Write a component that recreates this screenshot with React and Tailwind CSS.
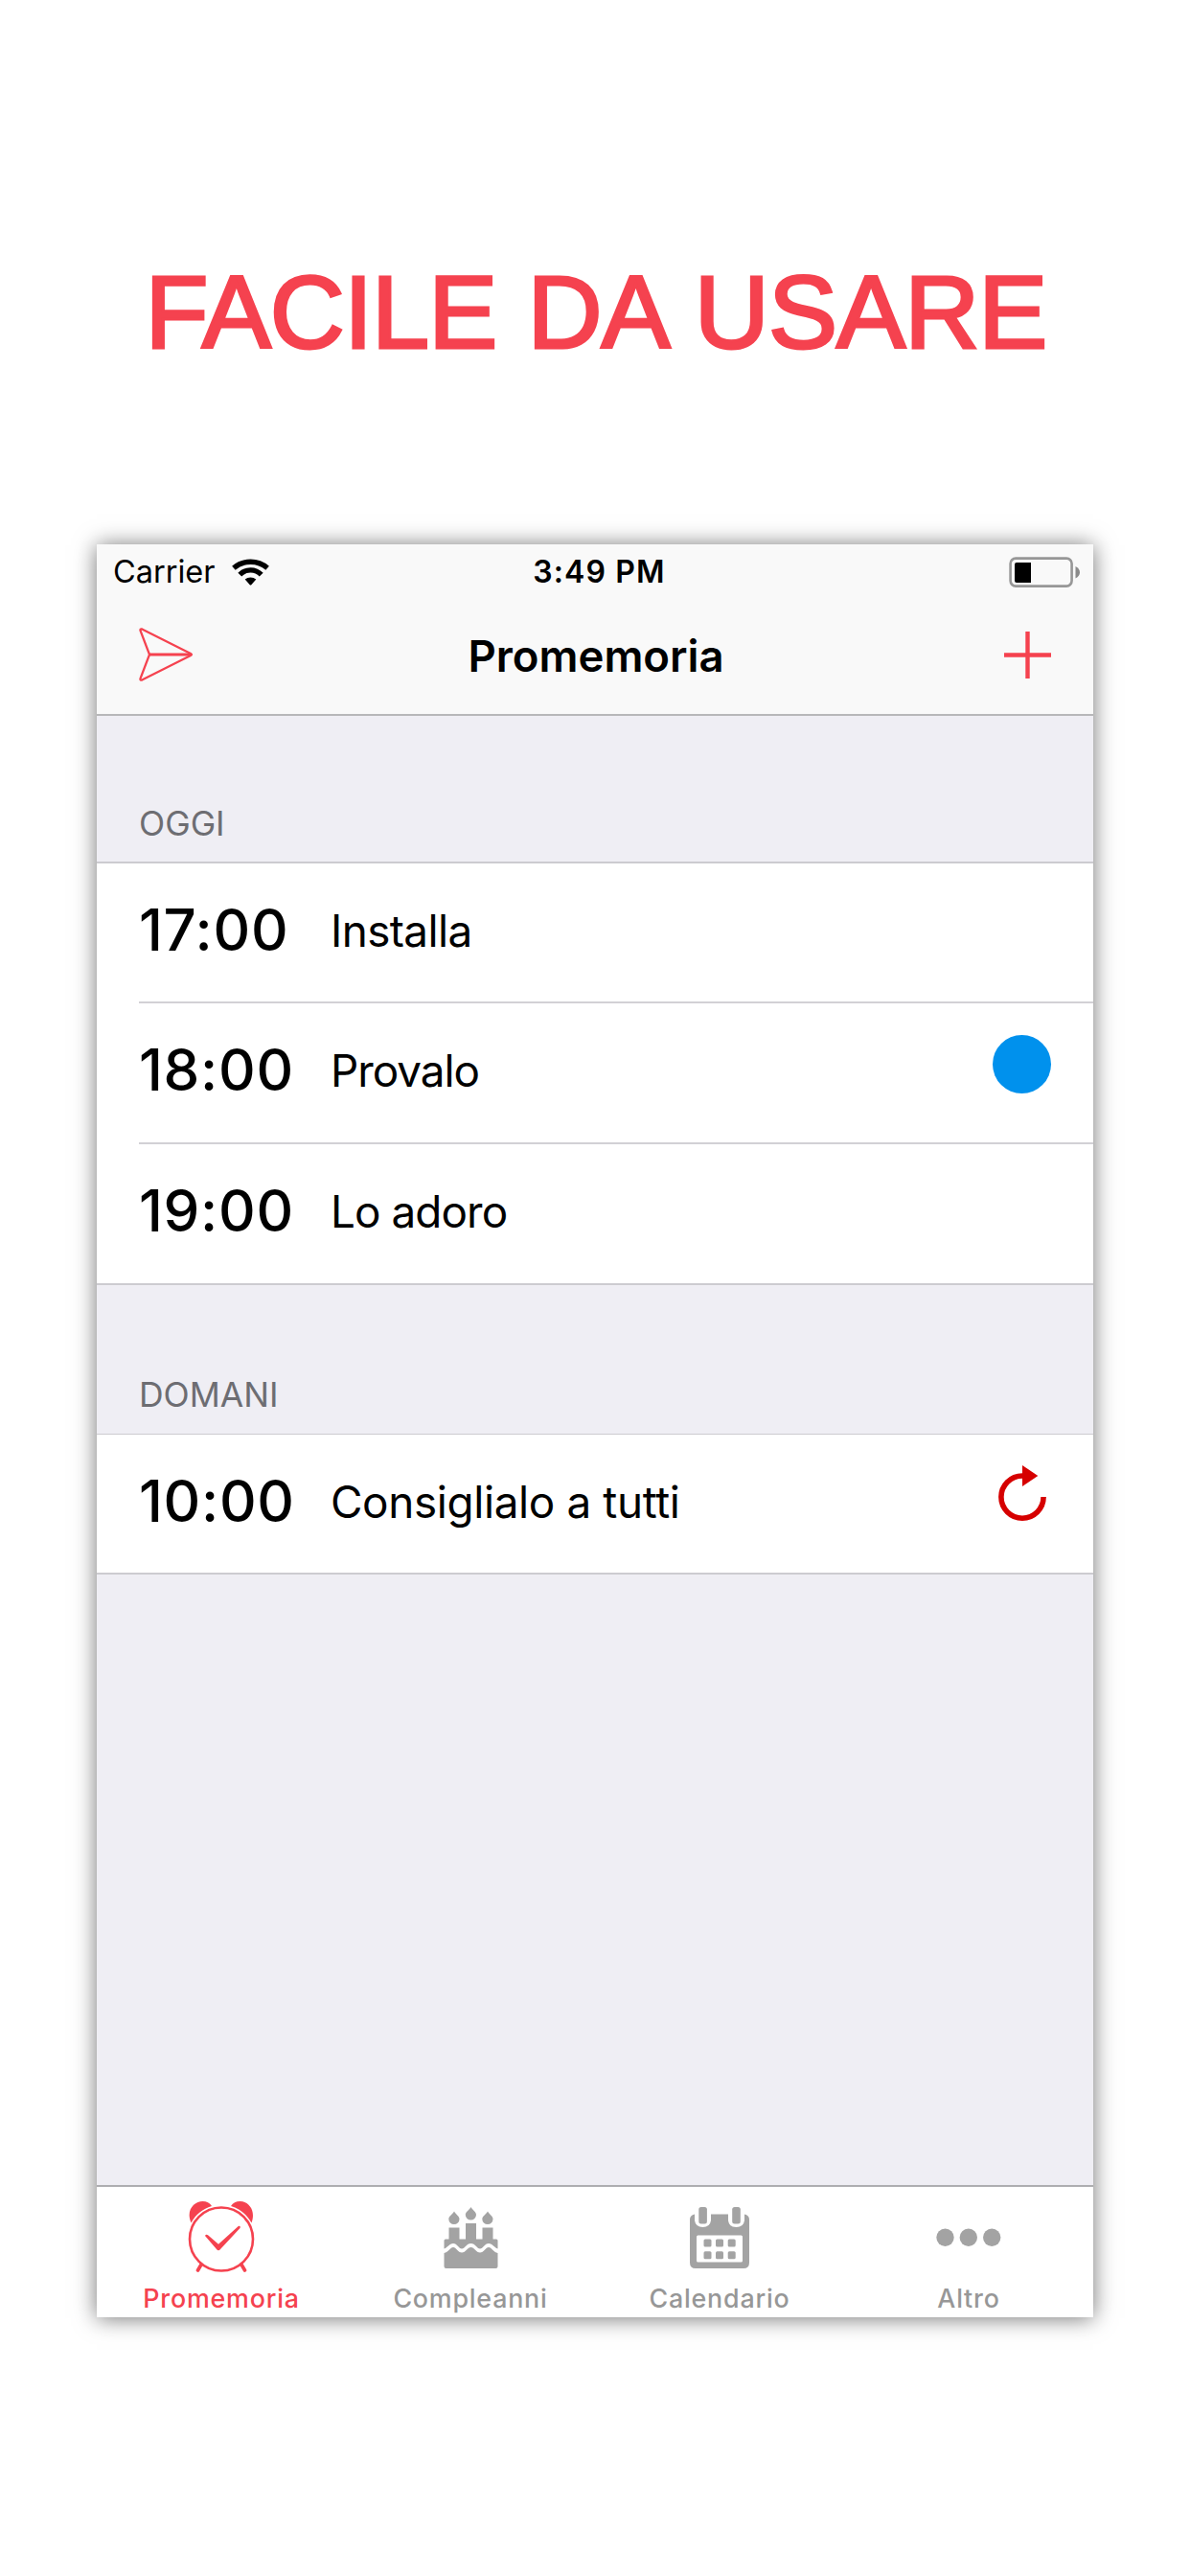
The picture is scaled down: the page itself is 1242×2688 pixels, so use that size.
import React from 'react';

const sections = [
  {
    title: 'OGGI',
    headerClass: 'h-[154px] border-b-2 pb-[20px]',
    items: [
      { time: '17:00', label: 'Installa', rowClass: 'h-[146px]', labelClass: 'tracking-[-0.6px]' },
      { time: '18:00', label: 'Provalo', badge: 'dot', rowClass: 'h-[147px]', labelClass: 'tracking-[-1px]' },
      { time: '19:00', label: 'Lo adoro', rowClass: 'h-[145px]', labelClass: 'tracking-[-0.9px]' },
    ],
  },
  {
    title: 'DOMANI',
    headerClass: 'h-[156px] border-b pb-[21px]',
    items: [
      {
        time: '10:00',
        label: 'Consiglialo a tutti',
        badge: 'repeat',
        rowClass: 'h-[144px]',
        labelClass: 'tracking-[-0.35px]',
      },
    ],
  },
];

const WifiIcon = () => (
  <svg width="39" height="28" viewBox="0 0 39 28" fill="none" stroke="#000" strokeWidth="5.4">
    <path d="M1.9 9.7 A 27 27 0 0 1 37.1 9.7" />
    <path d="M8.3 16.7 A 15.5 15.5 0 0 1 30.7 16.7" />
    <path d="M13.7 21.6 A 9 9 0 0 1 25.3 21.6 L20.5 27 Q19.5 28 18.5 27 Z" fill="#000" stroke="none" />
  </svg>
);

const BatteryIcon = () => (
  <svg width="74" height="32" viewBox="0 0 74 32">
    <rect x="1.6" y="1.6" width="64" height="29" rx="5.5" fill="none" stroke="#979797" strokeWidth="2.6" />
    <path d="M8 6 H23 V27 H8 Q6 27 6 25 V8 Q6 6 8 6 Z" fill="#000" />
    <path d="M69.5 10 Q74 12.5 74 16.2 Q74 20 69.5 22.5 Z" fill="#8a8a8a" />
  </svg>
);

const SendIcon = () => (
  <svg width="56" height="56" viewBox="0 0 56 56" fill="none" stroke="#f5424f" strokeLinejoin="round">
    <path d="M3.2 1.4 Q1 0.8 1.5 3 L11 28 L1.5 53 Q1 55.2 3.2 54.6 L54 29 Q56 28 54 27 Z" strokeWidth="2.2" />
    <path d="M11 28 H54" strokeWidth="2.8" />
  </svg>
);

const PlusIcon = () => (
  <svg width="49" height="49" viewBox="0 0 49 49" stroke="#f5424f" strokeWidth="4.4">
    <path d="M24.5 0 V49 M0 24.5 H49" />
  </svg>
);

const RepeatIcon = () => (
  <svg width="50" height="58" viewBox="0 0 50 58" fill="none">
    <path d="M25 11 A 22.1 22.1 0 1 0 47.1 33.1" stroke="#d60000" strokeWidth="5.6" />
    <path d="M25 0 L41.3 11 L25 22 Z" fill="#d60000" />
  </svg>
);

const AlarmIcon = () => (
  <svg width="71" height="74" viewBox="0 0 71 74" fill="none">
    <path d="M3.5 22.5 C-2.5 9 7 0 15.5 0 C19.5 0 23 1.8 25 5 C15.5 7.8 8.5 13.5 3.5 22.5 Z" fill="#f5424f" />
    <path d="M66.5 22.5 C71.5 9 63 0 54.5 0 C50.5 0 47 1.8 45 5 C54.5 7.8 61.5 13.5 66.5 22.5 Z" fill="#f5424f" />
    <circle cx="35" cy="39.5" r="33" stroke="#f5424f" strokeWidth="2.6" />
    <path d="M18 36 Q19 34 21 35.3 L32 44.8 L53 25.7 Q55.5 25.5 54.5 28 L34 50 Q32 52.5 30 50 Z" fill="#f5424f" />
    <path d="M14 66 L10.5 72 M56 66 L59.5 72" stroke="#f5424f" strokeWidth="3.6" strokeLinecap="round" />
  </svg>
);

const CakeIcon = () => (
  <svg width="57" height="64" viewBox="0 0 57 64" fill="#a3a3a3">
    <path d="M11 4.5 C13 8 16.5 9.5 16.5 12.5 A5.6 5.6 0 0 1 5.3 12.5 C5.3 9.5 9 8 11 4.5 Z" />
    <path d="M28.5 0 C30.5 3.5 34 5 34 8 A5.6 5.6 0 0 1 22.8 8 C22.8 5 26.5 3.5 28.5 0 Z" />
    <path d="M46 4.5 C48 8 51.5 9.5 51.5 12.5 A5.6 5.6 0 0 1 40.3 12.5 C40.3 9.5 44 8 46 4.5 Z" />
    <path d="M0.5 64 V48 C5 47 7 42 10 42 C13 42 15 47.5 19 47.5 C23 47.5 25 42 28.5 42 C32 42 34 47.5 38 47.5 C42 47.5 44 42 47 42 C50 42 52 47 56.5 48 V62 Q56.5 64 54.5 64 H2.5 Q0.5 64 0.5 62 Z" />
    <path d="M0.5 43.5 V35 Q0.5 33.5 2 33.5 H5.5 V21.5 H16.5 V33.5 H23 V17 H34 V33.5 H40.5 V21.5 H51.5 V33.5 H55 Q56.5 33.5 56.5 35 V43.5 C53 42.5 51 38 47 38 C43 38 41 43.5 38 43.5 C35 43.5 33 38 28.5 38 C24 38 22 43.5 19 43.5 C16 43.5 14 38 10 38 C6 38 4 42.5 0.5 43.5 Z" />
  </svg>
);

const CalendarIcon = () => (
  <svg width="62" height="64" viewBox="0 0 62 64" fill="#a3a3a3">
    <path d="M5 7.5 V14 Q6 21 13.5 21 Q21 21 22 14 V7.5 H40 V14 Q41 21 48.5 21 Q56 21 57 14 V7.5 Q62 8.5 62 13 V58 Q62 64 56 64 H6 Q0 64 0 58 V13 Q0 8.5 5 7.5 Z" />
    <rect x="7" y="29.5" width="48" height="28" rx="1.5" fill="#fff" />
    <rect x="9.3" y="0" width="8.6" height="17.5" rx="2.5" />
    <rect x="44.2" y="0" width="8.6" height="17.5" rx="2.5" />
    <rect x="14.5" y="33.5" width="8" height="8" rx="1.5" />
    <rect x="27" y="33.5" width="8" height="8" rx="1.5" />
    <rect x="39.7" y="33.5" width="8" height="8" rx="1.5" />
    <rect x="14.5" y="46.3" width="8" height="8" rx="1.5" />
    <rect x="27" y="46.3" width="8" height="8" rx="1.5" />
    <rect x="39.7" y="46.3" width="8" height="8" rx="1.5" />
  </svg>
);

const MoreIcon = () => (
  <svg width="68" height="64" viewBox="0 0 68 64" fill="#a3a3a3">
    <circle cx="9.5" cy="31.7" r="9.2" />
    <circle cx="33.8" cy="31.7" r="9.2" />
    <circle cx="58.2" cy="31.7" r="9.2" />
  </svg>
);

const tabs = [
  { label: 'Promemoria', Icon: AlarmIcon, textClass: 'text-[#f5424f]', iconClass: 'pt-[15px]' },
  { label: 'Compleanni', Icon: CakeIcon, textClass: 'text-[#979797]', iconClass: 'pt-[21px]' },
  { label: 'Calendario', Icon: CalendarIcon, textClass: 'text-[#979797]', iconClass: 'pt-[21px]' },
  { label: 'Altro', Icon: MoreIcon, textClass: 'text-[#979797]', iconClass: 'pt-[21px]' },
];

const ReminderRow = ({ item, last }) => (
  <div className={`flex items-start pr-11 ${item.rowClass} ${last ? '' : 'border-b-2 border-[#d2d1d5]'}`}>
    <span className="w-[200px] text-[60px] leading-[138px] font-medium tracking-[0.7px]">{item.time}</span>
    <span className={`flex-1 text-[45.8px] leading-[141px] ${item.labelClass}`}>{item.label}</span>
    {item.badge === 'dot' && <span className="mt-[33px] size-[61px] rounded-full bg-[#0091ed]" />}
    {item.badge === 'repeat' && (
      <span className="mt-8 mr-[5px]">
        <RepeatIcon />
      </span>
    )}
  </div>
);

const App = () => {
  return (
    <div className="flex h-[2688px] w-[1242px] flex-col items-center bg-white font-['Inter',sans-serif] text-black">
      <h1 className="h-[568px] pt-[262px] pl-[2px] text-center font-['Liberation_Sans',sans-serif] text-[108px] leading-[128px] tracking-[-0.9px] [word-spacing:3px] whitespace-nowrap text-[#f5424f] [-webkit-text-stroke:3px_#f5424f]">
        FACILE DA USARE
      </h1>

      <div className="flex h-[1850px] w-[1040px] flex-col bg-[#efeef4] shadow-[0_1px_22px_rgba(0,0,0,0.55)]">
        {/* Status bar and navigation bar */}
        <header className="h-[179px] border-b-2 border-[#b7b7b9] bg-[#f9f9f9]">
          <div className="grid h-[57px] grid-cols-3 items-center pr-[14px] pl-[17px]">
            <div className="flex items-center gap-[17px]">
              <span className="pt-px text-[32.5px] leading-none">Carrier</span>
              <WifiIcon />
            </div>
            <span className="pl-[6px] text-center text-[32px] leading-none font-semibold tracking-[1.1px]">3:49 PM</span>
            <div className="flex justify-end">
              <BatteryIcon />
            </div>
          </div>
          <div className="grid h-[116px] grid-cols-3 items-center px-11">
            <SendIcon />
            <span className="pt-[3px] pl-[2px] text-center text-[45.5px] leading-none font-semibold">
              Promemoria
            </span>
            <div className="flex justify-end">
              <PlusIcon />
            </div>
          </div>
        </header>

        {/* Reminders grouped by day */}
        <main className="flex-1">
          {sections.map((section) => (
            <section key={section.title}>
              <h2
                className={`flex items-end border-[#cccbd0] pl-11 text-[35.5px] leading-[38px] text-[#6d6d72] ${section.headerClass}`}
              >
                {section.title}
              </h2>
              <div className="border-b-2 border-[#cccbd0] bg-white pl-11">
                {section.items.map((item, index) => (
                  <ReminderRow key={item.time} item={item} last={index === section.items.length - 1} />
                ))}
              </div>
            </section>
          ))}
        </main>

        <nav className="grid h-[138px] grid-cols-4 border-t-2 border-[#aeaeb1] bg-white">
          {tabs.map(({ label, Icon, textClass, iconClass }) => (
            <div key={label} className="flex flex-col items-center">
              <div className={`h-[89px] ${iconClass}`}>
                <Icon />
              </div>
              <span className={`text-[26.8px] leading-[54px] font-medium tracking-[0.8px] ${textClass}`}>{label}</span>
            </div>
          ))}
        </nav>
      </div>
    </div>
  );
};

export default App;
